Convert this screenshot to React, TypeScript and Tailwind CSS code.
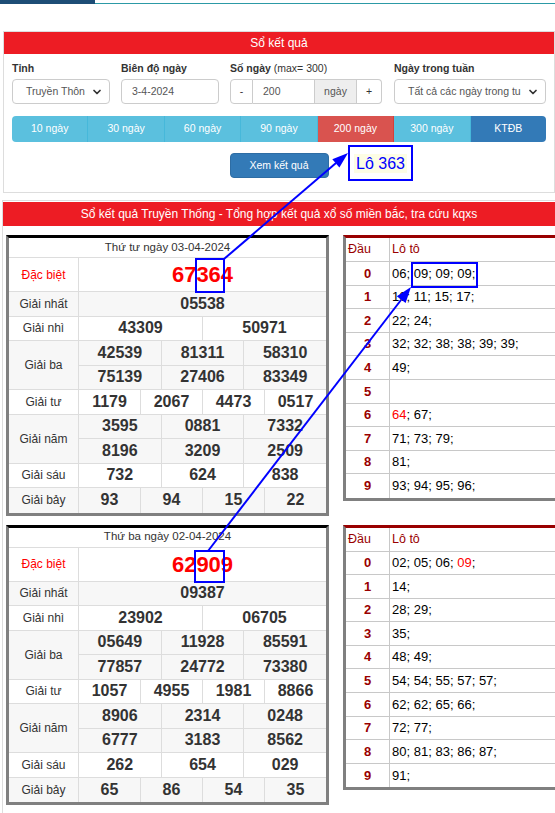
import React from 'react';
import { ChevronDown } from 'lucide-react';

type Prize = { label: string; rows: string[][]; special?: boolean };

const SPAN: Record<number, string> = {
  1: 'col-span-12',
  2: 'col-span-6',
  3: 'col-span-4',
  4: 'col-span-3',
};

type Day = {
  title: string;
  prizes: Prize[];
  loto: { d: string; items: { v: string; red?: boolean }[] }[];
};

const mk = (s: string, red?: string) =>
  s
    ? s.split(' ').map((v) => ({ v, red: v === red }))
    : [];

const days: Day[] = [
  {
    title: 'Thứ tư ngày 03-04-2024',
    prizes: [
      { label: 'Đặc biệt', rows: [['67364']], special: true },
      { label: 'Giải nhất', rows: [['05538']] },
      { label: 'Giải nhì', rows: [['43309', '50971']] },
      { label: 'Giải ba', rows: [['42539', '81311', '58310'], ['75139', '27406', '83349']] },
      { label: 'Giải tư', rows: [['1179', '2067', '4473', '0517']] },
      { label: 'Giải năm', rows: [['3595', '0881', '7332'], ['8196', '3209', '2509']] },
      { label: 'Giải sáu', rows: [['732', '624', '838']] },
      { label: 'Giải bảy', rows: [['93', '94', '15', '22']] },
    ],
    loto: [
      { d: '0', items: mk('06 09 09 09') },
      { d: '1', items: mk('10 11 15 17') },
      { d: '2', items: mk('22 24') },
      { d: '3', items: mk('32 32 38 38 39 39') },
      { d: '4', items: mk('49') },
      { d: '5', items: mk('') },
      { d: '6', items: mk('64 67', '64') },
      { d: '7', items: mk('71 73 79') },
      { d: '8', items: mk('81') },
      { d: '9', items: mk('93 94 95 96') },
    ],
  },
  {
    title: 'Thứ ba ngày 02-04-2024',
    prizes: [
      { label: 'Đặc biệt', rows: [['62909']], special: true },
      { label: 'Giải nhất', rows: [['09387']] },
      { label: 'Giải nhì', rows: [['23902', '06705']] },
      { label: 'Giải ba', rows: [['05649', '11928', '85591'], ['77857', '24772', '73380']] },
      { label: 'Giải tư', rows: [['1057', '4955', '1981', '8866']] },
      { label: 'Giải năm', rows: [['8906', '2314', '0248'], ['6777', '3183', '8562']] },
      { label: 'Giải sáu', rows: [['262', '654', '029']] },
      { label: 'Giải bảy', rows: [['65', '86', '54', '35']] },
    ],
    loto: [
      { d: '0', items: mk('02 05 06 09', '09') },
      { d: '1', items: mk('14') },
      { d: '2', items: mk('28 29') },
      { d: '3', items: mk('35') },
      { d: '4', items: mk('48 49') },
      { d: '5', items: mk('54 54 55 57 57') },
      { d: '6', items: mk('62 62 65 66') },
      { d: '7', items: mk('72 77') },
      { d: '8', items: mk('80 81 83 86 87') },
      { d: '9', items: mk('91') },
    ],
  },
];

function Select({ text, width }: { text: string; width: string }) {
  return (
    <div className={`${width} h-[25px] border border-[#ccc] rounded-[4px] flex items-center pl-[13px] pr-[6px] bg-white`}>
      <span className="flex-1 whitespace-nowrap text-[10.5px] text-[#555]">{text}</span>
      <ChevronDown size={12} strokeWidth={3.5} className="text-[#333] shrink-0 ml-[2px]" />
    </div>
  );
}

function Label({ children }: { children: React.ReactNode }) {
  return <div className="mt-[6px] h-[17px] leading-[17px] text-[10.5px] font-bold text-[#333] whitespace-nowrap">{children}</div>;
}

function Panel1() {
  const btns = [
    { t: '10 ngày', c: 'bg-[#5bc0de] border-[#46b8da]' },
    { t: '30 ngày', c: 'bg-[#5bc0de] border-[#46b8da]' },
    { t: '60 ngày', c: 'bg-[#5bc0de] border-[#46b8da]' },
    { t: '90 ngày', c: 'bg-[#5bc0de] border-[#46b8da]' },
    { t: '200 ngày', c: 'bg-[#d9534f] border-[#d43f3a]' },
    { t: '300 ngày', c: 'bg-[#5bc0de] border-[#46b8da]' },
    { t: 'KTĐB', c: 'bg-[#337ab7] border-[#2e6da4]' },
  ];
  return (
    <div className="mt-[27px] ml-[3px] w-[552px] border border-[#ddd]">
      <div className="h-[22px] bg-[#ed1c24] text-white text-[12px] flex items-center justify-center">Sổ kết quả</div>
      <div className="px-[8px] pb-[14px]">
        <div className="flex gap-[11px]">
          <div className="w-[98px] shrink-0">
            <Label>Tỉnh</Label>
            <div className="mt-[2px]">
              <Select text="Truyền Thôn" width="w-[98px]" />
            </div>
          </div>
          <div className="w-[98px] shrink-0">
            <Label>Biên độ ngày</Label>
            <div className="mt-[2px] h-[25px] border border-[#ccc] rounded-[4px] flex items-center pl-[10px] text-[10.5px] text-[#555]">3-4-2024</div>
          </div>
          <div className="w-[152px] shrink-0">
            <Label>
              Số ngày <span className="font-normal">(max= 300)</span>
            </Label>
            <div className="mt-[2px] flex h-[25px] text-[10.5px] text-[#555]">
              <div className="w-[23px] border border-[#ccc] rounded-l-[4px] flex items-center justify-center text-[#333]">-</div>
              <div className="w-[62px] border-y border-r border-[#ccc] flex items-center pl-[10px]">200</div>
              <div className="w-[42px] border-y border-r border-[#ccc] bg-[#eee] flex items-center justify-center">ngày</div>
              <div className="w-[25px] border-y border-r border-[#ccc] rounded-r-[4px] flex items-center justify-center text-[#333]">+</div>
            </div>
          </div>
          <div className="w-[152px] shrink-0 ml-[1px]">
            <Label>Ngày trong tuần</Label>
            <div className="mt-[2px]">
              <Select text="Tất cả các ngày trong tu" width="w-[152px]" />
            </div>
          </div>
        </div>
        <div className="mt-[12px] flex h-[26px] rounded-[4px] overflow-hidden">
          {btns.map((b) => (
            <div key={b.t} className={`flex-1 border-r last:border-r-0 ${b.c} text-white text-[10.5px] flex items-center justify-center`}>
              {b.t}
            </div>
          ))}
        </div>
        <div className="mt-[11px] flex justify-center">
          <div className="w-[99px] h-[25px] bg-[#337ab7] border border-[#2e6da4] rounded-[4px] text-white text-[10.5px] flex items-center justify-center">
            Xem kết quả
          </div>
        </div>
      </div>
    </div>
  );
}

function ResultTable({ day }: { day: Day }) {
  const last = day.prizes.length - 1;
  return (
    <div className="w-[323px] shrink-0 border-x-[3px] border-b-[3px] border-[#808080] border-t-[3px] border-t-black bg-white">
      <div className="grid grid-cols-[69px_repeat(12,minmax(0,1fr))] grid-rows-[20px_34px_repeat(9,24.5px)]">
        <div className="col-span-full border-b border-[#ddd] flex items-center justify-center text-[11.5px] text-[#333]">{day.title}</div>
        {day.prizes.map((p, pi) => {
          const bg = pi % 2 === 1 ? 'bg-[#f7f7f7]' : 'bg-white';
          const bb = pi === last ? '' : 'border-b border-[#ddd]';
          const cells: React.ReactNode[] = [];
          cells.push(
            <div
              key={`l${pi}`}
              className={`${p.rows.length === 2 ? 'row-span-2' : ''} ${bg} ${bb} flex items-center justify-center text-[12px] ${p.special ? 'text-[#ff0000]' : 'text-[#333]'}`}
            >
              {p.label}
            </div>
          );
          p.rows.forEach((r, ri) => {
            r.forEach((v, vi) => {
              const rb = ri < p.rows.length - 1 || pi !== last ? 'border-b border-[#ddd]' : '';
              cells.push(
                <div
                  key={`v${pi}-${ri}-${vi}`}
                  className={`${SPAN[r.length]} ${bg} ${rb} border-l border-[#ddd] flex items-center justify-center font-bold ${
                    p.special ? 'text-[22px] text-[#ff0000]' : 'text-[16px] text-[#333]'
                  }`}
                >
                  {v}
                </div>
              );
            });
          });
          return cells;
        })}
      </div>
    </div>
  );
}

function LotoTable({ day }: { day: Day }) {
  return (
    <div className="w-[216px] shrink-0 border-l-[3px] border-b-[3px] border-[#808080] border-t-[3px] border-t-[#990000] bg-white">
      <div className="grid grid-cols-[44px_1fr] grid-rows-[24px_repeat(10,23.6px)]">
        <div className="border-b border-r border-[#c8c8c8] flex items-center pl-[2px] text-[12.5px] text-[#990000]">Đầu</div>
        <div className="border-b border-[#c8c8c8] flex items-center pl-[2px] text-[12.5px] text-[#990000]">Lô tô</div>
        {day.loto.map((r, i) => {
          const bb = i === 9 ? '' : 'border-b border-[#c8c8c8]';
          return (
            <React.Fragment key={r.d}>
              <div className={`${bb} border-r border-[#c8c8c8] flex items-center justify-center text-[13px] font-bold text-[#990000]`}>{r.d}</div>
              <div className={`${bb} flex items-center pl-[2px] text-[13px] text-black whitespace-pre`}>
                <span>
                  {r.items.map((it, k) => (
                    <React.Fragment key={k}>
                      {k > 0 ? ' ' : ''}
                      <span className={it.red ? 'text-[#ff0000]' : ''}>{it.v}</span>
                      {';'}
                    </React.Fragment>
                  ))}
                </span>
              </div>
            </React.Fragment>
          );
        })}
      </div>
    </div>
  );
}

function Panel2() {
  return (
    <div className="mt-[7px] ml-[2px] w-[553px] border-t border-l border-[#ddd] pb-[8px]">
      <div className="mt-[1px] h-[24px] bg-[#ed1c24] text-white text-[12px] flex items-center justify-center whitespace-nowrap">
        Sổ kết quả Truyền Thống - Tổng hợp kết quả xổ số miền bắc, tra cứu kqxs
      </div>
      <div className="pl-[3px] pt-[9px] flex flex-col gap-[9px]">
        {days.map((d) => (
          <div key={d.title} className="flex items-start gap-[14px]">
            <ResultTable day={d} />
            <LotoTable day={d} />
          </div>
        ))}
      </div>
    </div>
  );
}

function Overlay() {
  const blue = '#0000ff';
  return (
    <>
      <svg className="absolute left-0 top-0 pointer-events-none" width={555} height={813} viewBox="0 0 555 813">
        <rect x={196} y={259} width={28} height={33} fill="none" stroke={blue} strokeWidth={2} />
        <rect x={195} y={551} width={29} height={31} fill="none" stroke={blue} strokeWidth={2} />
        <rect x={412} y={263} width={65} height={24} fill="none" stroke={blue} strokeWidth={2} />
        <line x1={224} y1={259} x2={336} y2={163} stroke={blue} strokeWidth={2} />
        <polygon points="348,153 339.4,167.6 332.3,159.2" fill={blue} />
        <line x1={208} y1={551} x2={401} y2={300} stroke={blue} strokeWidth={2} />
        <polygon points="411,287 405.6,303 396.8,296.3" fill={blue} />
      </svg>
      <div className="absolute left-[348px] top-[145px] w-[65px] h-[36px] border-2 border-[#0000ff] flex items-center justify-center pointer-events-none">
        <span className="bg-[#fdfde4] px-[2px] text-[16px] leading-[19px] text-[#0000ff]">Lô 363</span>
      </div>
    </>
  );
}

export default function App() {
  return (
    <div className="relative w-[555px] h-[813px] overflow-hidden bg-white font-['Liberation_Sans',Arial,sans-serif] text-[#333]">
      <div className="flex h-[4px]">
        <div className="w-[95px] bg-[#1d4d76]" />
        <div className="flex-1 border-b border-[#2c9aa6]" />
      </div>
      <Panel1 />
      <Panel2 />
      <Overlay />
    </div>
  );
}
